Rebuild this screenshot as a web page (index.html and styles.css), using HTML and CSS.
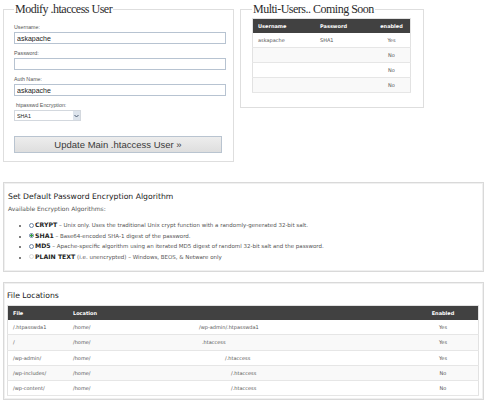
FILE: index.html
```html
<!DOCTYPE html>
<html>
	<head>
		<meta charset="UTF-8">
		<title>AskApache Password Protect</title>
		<link rel="stylesheet" href="styles.css">
	</head>
	<body>
		<div class="top">
			<fieldset class="user-box">
				<legend>Modify .htaccess User</legend>
				<div class="field">
					<label for="aa-user">Username:</label>
					<input type="text" id="aa-user" value="askapache">
				</div>
				<div class="field">
					<label for="aa-pass">Password:</label>
					<input type="password" id="aa-pass" value="">
				</div>
				<div class="field">
					<label for="aa-name">Auth Name:</label>
					<input type="text" id="aa-name" value="askapache">
				</div>
				<div class="field field-select">
					<label for="aa-enc">htpasswd Encryption:</label>
					<span class="select-wrap">
						<select id="aa-enc">
							<option>SHA1</option>
							<option>CRYPT</option>
							<option>MD5</option>
						</select>
						<span class="select-arrow"><svg width="5" height="4" viewBox="0 0 5 4"><path d="M0.5 1 L2.5 3 L4.5 1" fill="none" stroke="#4a5a70" stroke-width="1"/></svg></span>
					</span>
				</div>
				<button type="button" class="update-btn">Update Main .htaccess User &raquo;</button>
			</fieldset>

			<fieldset class="multi-box">
				<legend>Multi-Users.. Coming Soon</legend>
				<table class="grid users">
					<thead>
						<tr><th>Username</th><th>Password</th><th class="c">enabled</th></tr>
					</thead>
					<tbody>
						<tr><td>askapache</td><td>SHA1</td><td class="c">Yes</td></tr>
						<tr class="alt"><td></td><td></td><td class="c">No</td></tr>
						<tr><td></td><td></td><td class="c">No</td></tr>
						<tr class="alt"><td></td><td></td><td class="c">No</td></tr>
					</tbody>
				</table>
			</fieldset>
		</div>

		<div class="box algo-box">
			<h3>Set Default Password Encryption Algorithm</h3>
			<p>Available Encryption Algorithms:</p>
			<ul class="algos">
				<li><input type="radio" name="algo"><b>CRYPT</b> &ndash; Unix only. Uses the traditional Unix crypt function with a randomly-generated 32-bit salt.</li>
				<li><input type="radio" name="algo" checked><b>SHA1</b> &ndash; Base64-encoded SHA-1 digest of the password.</li>
				<li><input type="radio" name="algo"><b>MD5</b> &ndash; Apache-specific algorithm using an iterated MD5 digest of randoml 32-bit salt and the password.</li>
				<li><input type="radio" name="algo" disabled><b>PLAIN TEXT</b> (i.e. unencrypted) &ndash; Windows, BEOS, &amp; Netware only</li>
			</ul>
		</div>

		<div class="box files-box">
			<h3>File Locations</h3>
			<table class="grid files">
				<thead>
					<tr><th class="col-file">File</th><th>Location</th><th class="c col-en">Enabled</th></tr>
				</thead>
				<tbody>
					<tr><td>/.htpasswda1</td><td><span class="home">/home/</span><span class="rest r1">/wp-admin/.htpasswda1</span></td><td class="c">Yes</td></tr>
					<tr class="alt"><td>/</td><td><span class="home">/home/</span><span class="rest r2">.htaccess</span></td><td class="c">Yes</td></tr>
					<tr><td>/wp-admin/</td><td><span class="home">/home/</span><span class="rest r3">/.htaccess</span></td><td class="c">Yes</td></tr>
					<tr class="alt"><td>/wp-includes/</td><td><span class="home">/home/</span><span class="rest r4">/.htaccess</span></td><td class="c">No</td></tr>
					<tr><td>/wp-content/</td><td><span class="home">/home/</span><span class="rest r4">/.htaccess</span></td><td class="c">No</td></tr>
				</tbody>
			</table>
		</div>
	</body>
</html>
```

FILE: styles.css
```css
body {
	margin: 0;
	background: #fff;
	color: #333;
	font-family: "DejaVu Sans", Verdana, sans-serif;
}

.top {
	display: flex;
	align-items: flex-start;
	gap: 6px;
	padding: 2px 0 0 3px;
}

fieldset {
	margin: 0;
	min-width: 0;
	border: 1px solid #dedede;
	box-sizing: border-box;
}
legend {
	padding: 0 1px;
	font-family: "Liberation Serif", "Times New Roman", serif;
	font-size: 12px;
	letter-spacing: -0.5px;
	line-height: 15px;
	color: #2b2b2b;
}

/* modify user */
.user-box {
	width: 231px;
	padding: 6px 10px 8px 10px;
}
.field {
	margin-bottom: 5px;
}
.field label {
	display: block;
	height: 8px;
	line-height: 8px;
	margin-bottom: 1px;
	font-family: "Liberation Sans", Arial, sans-serif;
	font-size: 5.3px;
	color: #555;
}
.field input {
	display: block;
	box-sizing: border-box;
	width: 212px;
	height: 12px;
	margin: 0;
	padding: 0 2px;
	border: 1px solid #b7c3d1;
	font-family: "Liberation Sans", Arial, sans-serif;
	font-size: 7px;
	color: #222;
	outline: none;
}
.field-select label {
	padding-left: 2px;
}
.select-wrap {
	position: relative;
	display: block;
	width: 67px;
}
.select-wrap select {
	display: block;
	appearance: none;
	-webkit-appearance: none;
	box-sizing: border-box;
	width: 67px;
	height: 11px;
	margin: 0;
	padding: 0 2px;
	border: 1px solid #d3d8de;
	border-radius: 0;
	background: #fff;
	font-family: "Liberation Sans", Arial, sans-serif;
	font-size: 5.3px;
	color: #222;
}
.select-arrow {
	position: absolute;
	top: 1px;
	right: 1px;
	width: 7px;
	height: 9px;
	background: #dde4ec;
	display: flex;
	align-items: center;
	justify-content: center;
}
.update-btn {
	display: block;
	box-sizing: border-box;
	width: 208px;
	height: 17px;
	margin: 15px 0 0;
	padding: 0;
	border: 1px solid #b9c4d0;
	background: linear-gradient(#ededed, #dedede);
	font-family: "Liberation Sans", Arial, sans-serif;
	font-size: 9.5px;
	color: #3a3a3a;
}

/* multi users */
.multi-box {
	width: 184px;
	padding: 1px 11px 14px 11px;
}

.grid {
	border-collapse: collapse;
	border: 1px solid #e2e2e2;
	font-family: "DejaVu Sans", Verdana, sans-serif;
}
.grid th {
	background: #414141;
	color: #fff;
	font-weight: bold;
	text-align: left;
	font-size: 5px;
	height: 14px;
	padding: 0 5px;
}
.grid td {
	font-size: 5px;
	color: #555;
	height: 14px;
	padding: 0 5px;
	border-bottom: 1px solid #e6e6e6;
	background: #fff;
	white-space: nowrap;
}
.grid tr.alt td {
	background: #f9f9f9;
}
.grid .c {
	text-align: center;
}
.users {
	width: 159px;
}
.users th:nth-child(1) { width: 52px; }
.users th:nth-child(2) { width: 48px; }

/* boxes */
.box {
	margin: 20px 4px 0 3px;
	border: 1px solid #d9d9d9;
	box-shadow: inset 0 0 0 1px #f0f0f0;
	padding: 9px 4px 9px;
}
.box h3 {
	margin: 0;
	font-size: 7.7px;
	line-height: 10px;
	font-weight: normal;
	color: #222;
}
.algo-box p {
	margin: 3px 0 0;
	font-size: 6px;
	line-height: 8px;
	color: #555;
}
.algos {
	margin: 7px 0 0;
	padding-left: 21px;
	list-style: disc;
}
.algos li {
	font-size: 5.5px;
	line-height: 10.5px;
	color: #555;
}
.algos b {
	font-size: 6.2px;
	color: #1e1e1e;
}
.algos input {
	appearance: none;
	-webkit-appearance: none;
	box-sizing: border-box;
	width: 5px;
	height: 5px;
	margin: 0 1px 0 0;
	border: 1px solid #6f86a6;
	border-radius: 50%;
	background: #fff;
	vertical-align: -0.5px;
}
.algos input:checked {
	background: radial-gradient(circle, #2fa23a 0 1.2px, #fff 1.4px);
}
.algos input:disabled {
	border-color: #dcdcdc;
}

.files-box {
	margin-top: 10px;
	padding: 8px 4px 3px 3px;
}
.files-box h3 {
	line-height: 9px;
}
.files {
	width: 472px;
	margin-top: 5px;
}
.files td {
	height: 14.3px;
}
.files .col-file { width: 50px; }
.files .col-en { width: 60px; }
.files .home {
	display: inline-block;
	width: 20px;
}
.files .rest.r1 { margin-left: 106px; }
.files .rest.r2 { margin-left: 109px; }
.files .rest.r3 { margin-left: 132px; }
.files .rest.r4 { margin-left: 138px; }
```
